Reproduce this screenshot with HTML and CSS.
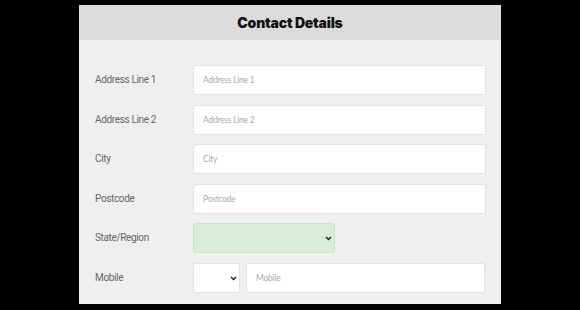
FILE: index.html
```html
<!DOCTYPE html>
<html>
<head>
<meta charset="utf-8">
<link rel="stylesheet" href="styles.css">
</head>
<body>
<div class="panel">
  <div class="header"><h1 class="title">Contact Details</h1></div>
  <form class="form">
    <div class="row">
      <label class="label">Address Line 1</label>
      <input class="field" type="text" placeholder="Address Line 1">
    </div>
    <div class="row">
      <label class="label">Address Line 2</label>
      <input class="field" type="text" placeholder="Address Line 2">
    </div>
    <div class="row">
      <label class="label">City</label>
      <input class="field" type="text" placeholder="City">
    </div>
    <div class="row">
      <label class="label">Postcode</label>
      <input class="field" type="text" placeholder="Postcode">
    </div>
    <div class="row">
      <label class="label">State/Region</label>
      <div class="select-wrap state">
        <select class="select green"><option></option></select>
        <svg class="chev" width="7" height="5" viewBox="0 0 7 5"><path d="M1 1 L3.5 3.5 L6 1" fill="none" stroke="#222" stroke-width="1.5"/></svg>
      </div>
    </div>
    <div class="row">
      <label class="label">Mobile</label>
      <div class="mobile">
        <div class="select-wrap code">
          <select class="select"><option></option></select>
          <svg class="chev" width="7" height="5" viewBox="0 0 7 5"><path d="M1 1 L3.5 3.5 L6 1" fill="none" stroke="#222" stroke-width="1.5"/></svg>
        </div>
        <input class="field grow" type="text" placeholder="Mobile">
      </div>
    </div>
  </form>
</div>
</body>
</html>
```
FILE: styles.css
```css
html, body {
  margin: 0;
  padding: 0;
  background: #000;
  height: 100%;
}
body {
  padding-top: 5px;
  box-sizing: border-box;
  font-family: Roboto, "Liberation Sans", sans-serif;
}
.panel {
  width: 422px;
  margin-left: 79px;
  height: 299px;
  background: #efefef;
  overflow: hidden;
}
.header {
  height: 35px;
  background: #dcdcdc;
  display: flex;
  align-items: center;
  justify-content: center;
}
.title {
  margin: 0;
  font-family: Inter, "Liberation Sans", sans-serif;
  font-weight: 900;
  font-size: 14px;
  color: #111;
  letter-spacing: -0.2px;
}
.form {
  padding: 25px 15px 0 16px;
  display: flex;
  flex-direction: column;
  gap: 9.5px;
}
.row {
  display: flex;
  align-items: center;
  height: 30px;
}
.label {
  width: 98px;
  flex: none;
  font-size: 10px;
  color: #666;
  letter-spacing: -0.35px;
  padding-bottom: 1px;
}
.field {
  flex: 1;
  min-width: 0;
  height: 30px;
  box-sizing: border-box;
  border: 1px solid #e2e2e2;
  border-radius: 2px;
  background: #fff;
  padding: 0 9px;
  font-family: Lato, Roboto, sans-serif;
  font-size: 8.5px;
  letter-spacing: -0.25px;
  outline: none;
}
.field::placeholder {
  color: #ababab;
  font-weight: 400;
}
.select-wrap {
  position: relative;
  height: 30px;
}
.state {
  width: 142px;
}
.code {
  width: 47px;
  flex: none;
}
.select {
  appearance: none;
  -webkit-appearance: none;
  width: 100%;
  height: 30px;
  box-sizing: border-box;
  border: 1px solid #e2e2e2;
  border-radius: 2px;
  background: #fff;
  margin: 0;
}
.select.green {
  background: #d8eddc;
  border-color: #c2e6cb;
}
.chev {
  position: absolute;
  right: 3px;
  top: 13px;
  pointer-events: none;
}
.mobile {
  flex: 1;
  display: flex;
  gap: 6px;
  padding-right: 1px;
}
.grow {
  flex: 1;
}
```
